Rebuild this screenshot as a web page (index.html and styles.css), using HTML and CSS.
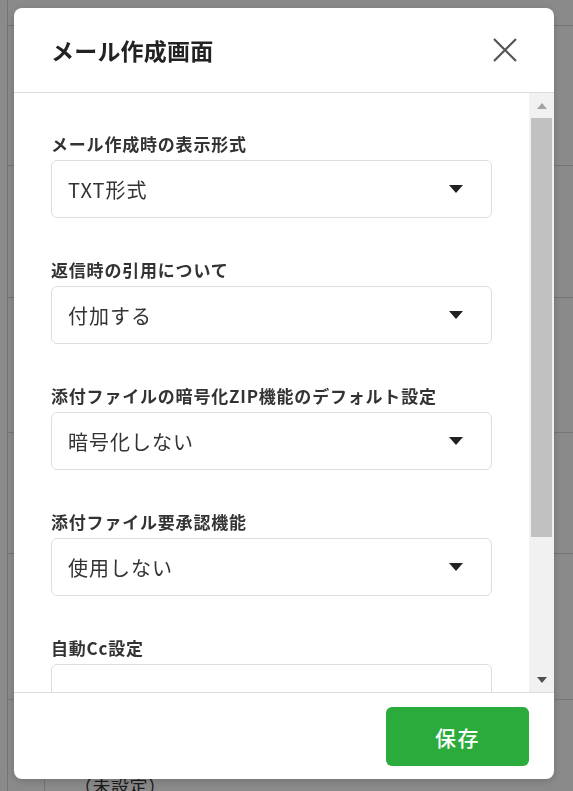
FILE: index.html
```html
<!DOCTYPE html>
<html lang="ja">
<head>
<meta charset="utf-8">
<title>メール作成画面</title>
<link rel="stylesheet" href="styles.css">
</head>
<body>
<div class="page">
  <div class="page-row r1"></div>
  <div class="page-row r2"></div>
  <div class="page-row r3"></div>
  <div class="page-row r4"></div>
  <div class="page-row r5"></div>
  <div class="page-row r6"></div>
  <div class="page-row last">
    <div class="cell-left"></div>
    <div class="cell-text">（未設定）</div>
  </div>
</div>
<div class="overlay"></div>
<div class="modal">
  <div class="modal-header">
    <h1 class="modal-title">メール作成画面</h1>
    <button class="close-btn" aria-label="閉じる">
      <svg width="24" height="24" viewBox="0 0 24 24"><path d="M1 1 L23 23 M23 1 L1 23" stroke="#555" stroke-width="2.2" fill="none"/></svg>
    </button>
  </div>
  <div class="modal-body">
    <div class="content">
      <div class="field">
        <div class="label">メール作成時の表示形式</div>
        <div class="select"><span>TXT形式</span><i class="caret"></i></div>
      </div>
      <div class="field">
        <div class="label">返信時の引用について</div>
        <div class="select"><span>付加する</span><i class="caret"></i></div>
      </div>
      <div class="field">
        <div class="label">添付ファイルの暗号化ZIP機能のデフォルト設定</div>
        <div class="select"><span>暗号化しない</span><i class="caret"></i></div>
      </div>
      <div class="field">
        <div class="label">添付ファイル要承認機能</div>
        <div class="select"><span>使用しない</span><i class="caret"></i></div>
      </div>
      <div class="field">
        <div class="label">自動Cc設定</div>
        <div class="select"><span></span></div>
      </div>
    </div>
    <div class="scrollbar">
      <div class="sb-btn"><i class="sb-up"></i></div>
      <div class="sb-track"><div class="sb-thumb"></div></div>
      <div class="sb-btn"><i class="sb-down"></i></div>
    </div>
  </div>
  <div class="modal-footer">
    <button class="save-btn">保存</button>
  </div>
</div>
</body>
</html>
```
FILE: styles.css
```css
* { box-sizing: border-box; }
html, body { margin: 0; padding: 0; }
body {
  width: 573px;
  height: 791px;
  overflow: hidden;
  background: #fff;
  font-family: "Noto Sans CJK JP", "Noto Sans", sans-serif;
  color: #333;
}
.page {
  margin-left: 7px;
  border-left: 1px solid #d8d8d8;
  height: 791px;
  display: flex;
  flex-direction: column;
}
.page-row { border-bottom: 1px solid #d8d8d8; flex: none; }
.r1 { height: 26px; }
.r2 { height: 140px; }
.r3 { height: 132px; }
.r4 { height: 135px; }
.r5 { height: 121px; }
.r6 { height: 146px; }
.page-row.last { border-bottom: none; display: flex; flex: 1; }
.cell-left { width: 37px; border-right: 1px solid #d8d8d8; }
.cell-text {
  padding: 72px 0 0 29px;
  font-size: 18px;
  color: #333;
  letter-spacing: 0.5px;
}
.overlay {
  position: fixed;
  inset: 0;
  background: rgba(0, 0, 0, 0.46);
}
.modal {
  position: fixed;
  left: 14px;
  top: 8px;
  width: 540px;
  height: 771px;
  background: #fff;
  border-radius: 8px;
  box-shadow: 0 2px 10px rgba(0, 0, 0, 0.18);
  display: flex;
  flex-direction: column;
  overflow: hidden;
}
.modal-header {
  height: 85px;
  flex: none;
  border-bottom: 1px solid #dcdcdc;
  display: flex;
  align-items: center;
  justify-content: space-between;
  padding: 0 37px 0 37px;
}
.modal-title {
  margin: 0;
  font-size: 23px;
  font-weight: 700;
  color: #222;
  letter-spacing: 0.2px;
}
.close-btn {
  border: none;
  background: none;
  padding: 0;
  width: 24px;
  height: 24px;
  display: block;
}
.close-btn svg { display: block; }
.modal-body {
  flex: 1;
  display: flex;
  overflow: hidden;
  min-height: 0;
}
.content {
  flex: 1;
  padding: 39px 37px 0 37px;
  overflow: hidden;
}
.field { margin-bottom: 40px; }
.label {
  font-size: 17px;
  line-height: 24px;
  font-weight: 700;
  color: #333;
  letter-spacing: 0.8px;
  margin-bottom: 4px;
}
.select {
  height: 58px;
  border: 1px solid #dedede;
  border-radius: 6px;
  display: flex;
  align-items: center;
  justify-content: space-between;
  padding: 0 28px 0 16px;
  font-size: 20px;
  color: #333;
  letter-spacing: 1px;
}
.caret {
  width: 0;
  height: 0;
  border-left: 7.5px solid transparent;
  border-right: 7.5px solid transparent;
  border-top: 8px solid #222;
}
.scrollbar {
  width: 25px;
  flex: none;
  background: #f1f1f1;
  display: flex;
  flex-direction: column;
}
.sb-btn {
  height: 25px;
  flex: none;
  display: flex;
  align-items: center;
  justify-content: center;
}
.sb-up {
  width: 0; height: 0;
  border-left: 5.5px solid transparent;
  border-right: 5.5px solid transparent;
  border-bottom: 6px solid #a3a3a3;
}
.sb-down {
  width: 0; height: 0;
  border-left: 5.5px solid transparent;
  border-right: 5.5px solid transparent;
  border-top: 6px solid #505050;
}
.sb-track { flex: 1; padding: 0 2px; }
.sb-thumb { height: 419px; background: #c1c1c1; }
.modal-footer {
  height: 87px;
  flex: none;
  border-top: 1px solid #dcdcdc;
  display: flex;
  justify-content: flex-end;
  align-items: flex-start;
  padding: 14px 25px 0 0;
}
.save-btn {
  width: 143px;
  height: 59px;
  border: none;
  border-radius: 6px;
  background: #2bab3b;
  color: #fff;
  font-family: "Noto Sans CJK JP", "Noto Sans", sans-serif;
  font-size: 21px;
  font-weight: 500;
  letter-spacing: 1.5px;
}
```
